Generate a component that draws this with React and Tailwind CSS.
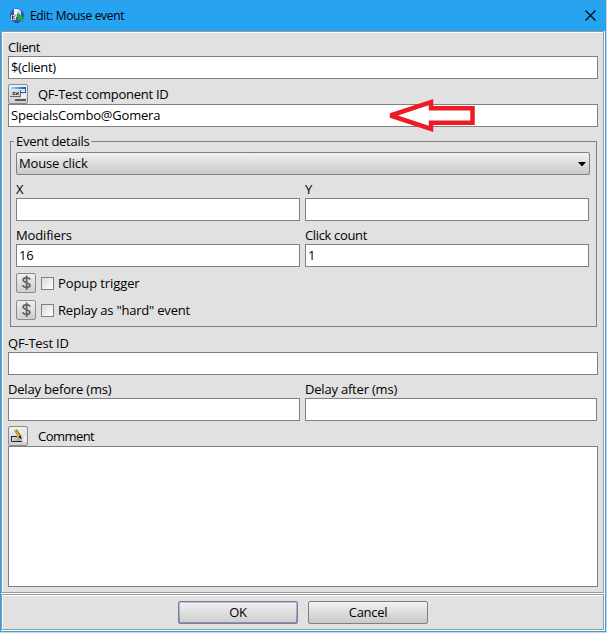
import { useState } from "react";

function TextField({ value, className = "" }) {
    return (
        <input
            type="text"
            defaultValue={value}
            className={`block h-[23px] border border-[#808080] bg-white px-[2px] pb-px outline-none ${className}`}
        />
    );
}

function Label({ children, className = "" }) {
    return <div className={`flex h-[23px] items-end leading-[18px] whitespace-nowrap ${className}`}>{children}</div>;
}

function IconButton({ children }) {
    return (
        <button className="flex h-5 w-5 shrink-0 items-center justify-center rounded-[2px] border border-[#8b8b8b] bg-linear-to-b from-[#f0f0f0] to-[#cfcfcf]">
            {children}
        </button>
    );
}

function AppIcon() {
    return (
        <svg width="16" height="16" viewBox="0 0 16 16" className="shrink-0">
            <circle cx="8" cy="7.5" r="7.2" fill="#4650b0" />
            <path d="M1 9a7 7 0 0 0 12 3L9 15Q3 15 1 9z" fill="#20248a" />
            <path d="M5 1h5l2 2v6H5z" fill="#b9dcf5" />
            <path d="M5 1h4v5H5z" fill="#edf8fc" />
            <path d="M2 7h5v5H2z" fill="#e5e6ee" />
            <path d="M3.500 7.500v4M6 7.500L4 9.500l2 2" stroke="#222" strokeWidth="1" fill="none" />
            <path d="M8.500 4l6 6-2 .3 2.400 3.400-1.600 1L11 11.300 8.500 12.500z" fill="#21b52c" />
            <path d="M8.500 6v6" stroke="#0c7a2c" strokeWidth=".8" />
        </svg>
    );
}

function ComponentIcon() {
    return (
        <svg width="18" height="18" viewBox="0 0 18 18" shapeRendering="crispEdges" className="shrink-0">
            <defs>
                <linearGradient id="bar" x1="0" x2="1">
                    <stop offset="0" stopColor="#9ae2ff" />
                    <stop offset="1" stopColor="#0050e8" />
                </linearGradient>
            </defs>
            <rect x="2" y="2" width="15" height="2" fill="url(#bar)" />
            <rect x="11" y="4" width="5" height="3" fill="#dde5f0" />
            <path d="M16.500 2v5.500H12" stroke="#1c5fc4" fill="none" />
            <rect x="1" y="5" width="11" height="7" fill="#dcdcdc" />
            <path d="M1 11.500h10.500V5" stroke="#666" fill="none" />
            <path d="M3 8.500h7" stroke="#a2a2a2" strokeWidth="3" />
            <path d="M4 7.500h2M4 9.500h2M7 7.500v2M9 7v1M8 8.500h1M9 9.500h1" stroke="#444" fill="none" />
            <rect x="12" y="9" width="5" height="4" fill="#f1f1f1" />
            <rect x="6" y="14" width="11" height="2" fill="#5a5a5a" />
        </svg>
    );
}

function DollarIcon() {
    return (
        <svg width="18" height="18" viewBox="0 0 18 18" fill="none" className="shrink-0">
            <path
                d="M13.500 5.800C12.800 3.300 6.500 3 6.500 6.200C6.500 9.300 13.500 8.200 13.500 11.500C13.500 14.800 6.800 14.500 6.300 11.500M10 2v14"
                stroke="#aaa"
                strokeWidth="1.500"
            />
            <path
                d="M12.800 5.500C12 3 6 3 6 6C6 9 12.800 8.200 12.800 11.300C12.800 14.300 6.300 14 5.700 11.200M9.500 1.500v14.500"
                stroke="#606060"
                strokeWidth="1.500"
            />
        </svg>
    );
}

function PencilIcon() {
    return (
        <svg width="18" height="18" viewBox="0 0 18 18" className="shrink-0">
            <defs>
                <linearGradient id="slot" x1="0" x2="1">
                    <stop offset="0" stopColor="#e8e8e8" />
                    <stop offset="0.500" stopColor="#aaa" />
                    <stop offset="1" stopColor="#fff" />
                </linearGradient>
            </defs>
            <rect x="2" y="9" width="15" height="6" fill="url(#slot)" />
            <path d="M2.500 9.500v5H13M2 9.500h6" stroke="#222" fill="none" />
            <path d="M6.500 3l4.500 6.500" stroke="#8c650c" strokeWidth="3" />
            <path d="M6.200 3.200l4 6" stroke="#dfaa28" strokeWidth="1.600" />
            <path d="M9.500 10l2.500-1 .6 3.500z" fill="#111" />
        </svg>
    );
}

function CheckRow({ label, className = "" }) {
    const [checked, setChecked] = useState(false);

    return (
        <div className="flex h-5 items-center">
            <IconButton>
                <DollarIcon />
            </IconButton>
            <button
                onClick={() => setChecked(!checked)}
                className="ml-[5px] h-[13px] w-[13px] border border-[#808080] bg-linear-to-br from-[#dcdcdc] to-white text-[10px] leading-[10px]"
            >
                {checked ? "✓" : ""}
            </button>
            <span className={`ml-1 leading-[18px] ${className}`}>{label}</span>
        </div>
    );
}

function Arrow() {
    return (
        <svg className="absolute top-[-6px] left-[377px]" width="92" height="36" viewBox="0 0 92 36">
            <path
                d="M5.500 17.500L46 4v6.300H87.500V24.700H46V31z"
                fill="#fff"
                stroke="#ed1c24"
                strokeWidth="4.500"
                strokeLinejoin="miter"
                strokeMiterlimit="2"
            />
        </svg>
    );
}

function App() {
    return (
        <div className="flex h-[633px] w-[607px] overflow-hidden bg-[#d4d4d4] font-['Open_Sans',sans-serif] text-[13px] text-black">
            <div className="flex h-[632px] w-[606px] flex-col border-x border-b border-[#26a4f2] bg-[#26a4f2]">
                {/* Title bar */}
                <div className="flex h-[31px] shrink-0 items-center border-t border-[#3ba0e0] pl-[8px]">
                    <AppIcon />
                    <span className="ml-[5px] text-[12px] leading-[18px] tracking-[-0.32px]">Edit: Mouse event</span>
                    <svg width="11" height="11" viewBox="0 0 11 11" className="mr-[9px] mb-px ml-auto">
                        <path d="M.5.500l10 10M10.500.500l-10 10" stroke="#000" strokeWidth="1.100" />
                    </svg>
                </div>

                {/* Form */}
                <div className="h-[563px] shrink-0 border-r border-b border-white bg-white">
                    <div className="h-[562px] border border-[#999]">
                        <div className="h-[560px] border-t border-l border-white bg-[#e1e1e1] pl-[5px]">
                            <Label className="tracking-[-0.45px]">Client</Label>
                            <TextField value="$(client)" className="w-[590px] tracking-[-0.35px]" />
                            <div className="mt-[5px] flex">
                                <IconButton>
                                    <ComponentIcon />
                                </IconButton>
                                <span className="ml-[10px] leading-[20px] tracking-[-0.27px]">QF-Test component ID</span>
                            </div>
                            <div className="relative">
                                <TextField value="SpecialsCombo@Gomera" className="w-[590px] tracking-[-0.2px]" />
                                <Arrow />
                            </div>

                            <div className="relative mt-[14px] ml-[2px] h-[186px] w-[587px] border border-[#808080] px-[5px] pt-[10px]">
                                <span className="absolute top-[-10px] left-[3px] bg-[#e1e1e1] px-[2px] leading-[18px] tracking-[-0.27px]">
                                    Event details
                                </span>
                                <button className="flex h-[23px] w-[574px] items-center justify-between rounded-[2px] border border-[#808080] bg-linear-to-b from-[#f2f2f2] to-[#c9c9c9] pr-[3px] pl-[2px]">
                                    <span className="tracking-[-0.15px]">Mouse click</span>
                                    <svg width="8" height="4" viewBox="0 0 8 4">
                                        <path d="M0 0h8L4.500 4h-1z" fill="#000" />
                                    </svg>
                                </button>
                                <div className="grid w-[573px] grid-cols-[284px_284px] gap-x-[5px]">
                                    <Label>X</Label>
                                    <Label>Y</Label>
                                    <TextField value="" />
                                    <TextField value="" />
                                    <Label className="tracking-[-0.15px]">Modifiers</Label>
                                    <Label className="tracking-[-0.35px]">Click count</Label>
                                    <TextField value="16" className="tracking-[-0.3px]" />
                                    <TextField value="1" />
                                </div>
                                <div className="mt-[6px] flex flex-col gap-[7px]">
                                    <CheckRow label="Popup trigger" className="tracking-[-0.1px]" />
                                    <CheckRow label={'Replay as "hard" event'} className="tracking-[-0.2px]" />
                                </div>
                            </div>

                            <Label className="mt-[2px] tracking-[-0.2px]">QF-Test ID</Label>
                            <TextField value="" className="w-[590px]" />
                            <div className="grid w-[589px] grid-cols-[292px_292px] gap-x-[5px]">
                                <Label className="tracking-[-0.18px]">Delay before (ms)</Label>
                                <Label className="tracking-[-0.2px]">Delay after (ms)</Label>
                                <TextField value="" />
                                <TextField value="" />
                            </div>
                            <div className="mt-[5px] flex">
                                <IconButton>
                                    <PencilIcon />
                                </IconButton>
                                <span className="ml-[10px] leading-[20px] tracking-[-0.55px]">Comment</span>
                            </div>
                            <textarea className="block h-[141px] w-[590px] resize-none border border-[#808080] bg-white outline-none" />
                        </div>
                    </div>
                </div>

                {/* Buttons */}
                <div className="h-[37px] shrink-0 border-r border-b border-white bg-white">
                    <div className="h-[36px] border border-[#999]">
                        <div className="flex h-[34px] gap-[10px] border-t border-l border-white bg-[#e1e1e1] pt-[5px] pl-[175px]">
                            <button className="h-[23px] w-[120px] rounded-[2px] border border-[#808080] bg-linear-to-b from-[#b5c0ea] to-[#7f8fcf] p-px">
                                <span className="flex h-[19px] items-center justify-center bg-linear-to-b from-[#f0f0f0] to-[#cfcfcf] tracking-[-0.4px]">
                                    OK
                                </span>
                            </button>
                            <button className="h-[23px] w-[120px] rounded-[2px] border border-[#808080] bg-linear-to-b from-[#f2f2f2] to-[#c9c9c9] tracking-[-0.3px]">
                                Cancel
                            </button>
                        </div>
                    </div>
                </div>
            </div>
        </div>
    );
}

export default App;
